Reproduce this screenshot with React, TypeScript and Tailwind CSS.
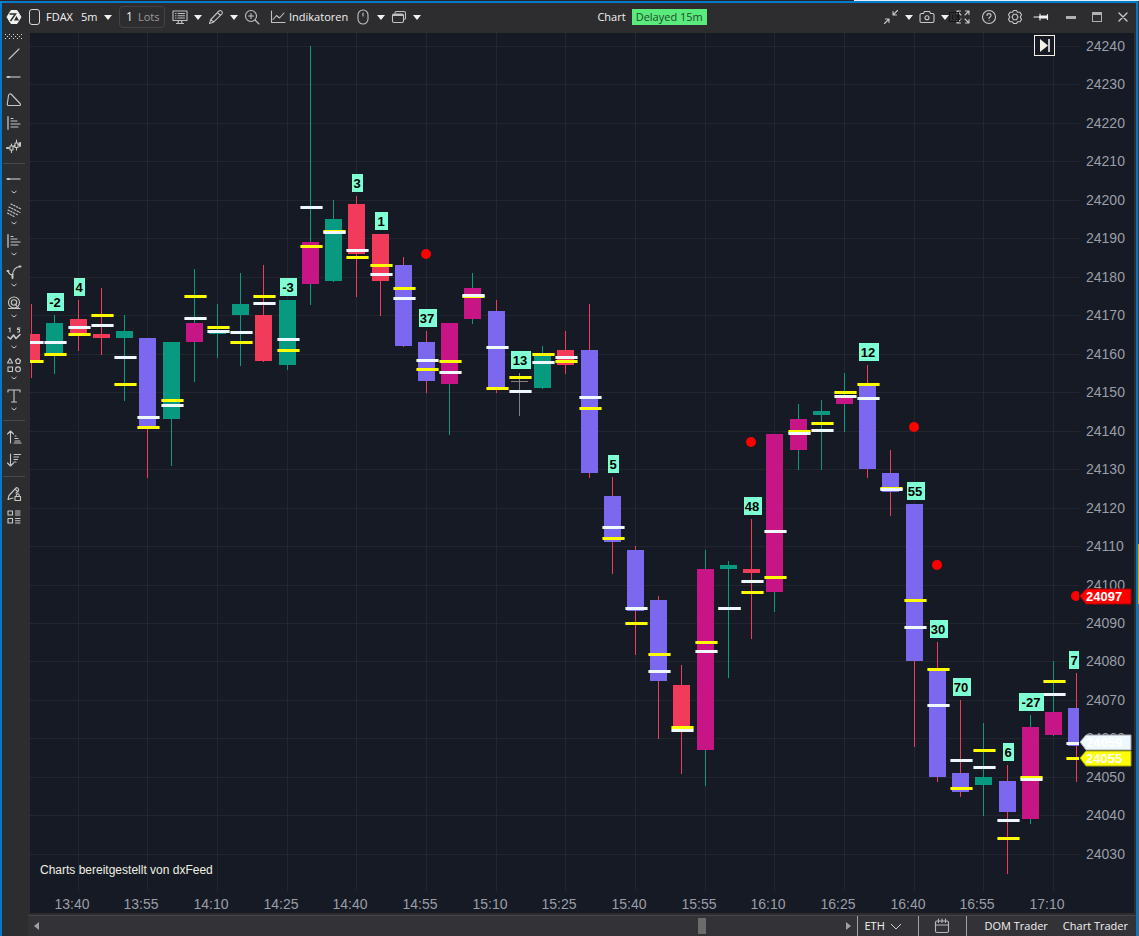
import type { ReactNode } from "react";

type Kind = "up" | "down" | "sell" | "buy" | "flat";

// h/l: wick ends, t/b: body ends, w: white level, y: yellow level
type Bar = {
  h: number;
  t: number;
  b: number;
  l: number;
  w: number;
  y: number;
  k: Kind;
  tag?: string;
};

const FIRST_INDEX = -2;
const TOP_PRICE = 24240;
const STEP = 3.848;
const BAR_GAP = 23.22;

const FILL: Record<Kind, string> = {
  up: "#089981",
  down: "#f23a5b",
  sell: "#7b68ee",
  buy: "#c71585",
  flat: "#808080",
};

// prices are stored without the leading 24000
const BARS: Bar[] = [
  { h: 173, t: 165, b: 158, l: 154, w: 162.9, y: 158, k: "down" },
  { h: 170, t: 168, b: 160, l: 155, w: 163.1, y: 160, k: "up", tag: "-2" },
  { h: 174, t: 169, b: 165, l: 161, w: 167, y: 165, k: "down", tag: "4" },
  { h: 177, t: 165, b: 164, l: 160, w: 167.4, y: 170, k: "down" },
  { h: 170, t: 166, b: 164, l: 148, w: 159.1, y: 152, k: "up" },
  { h: 164, t: 164, b: 141, l: 128, w: 143.5, y: 141, k: "sell" },
  { h: 163, t: 163, b: 143, l: 131, w: 146.6, y: 148, k: "up" },
  { h: 182, t: 168, b: 163, l: 153, w: 169.2, y: 175, k: "buy" },
  { h: 173, t: 166, b: 165, l: 159, w: 165.9, y: 167, k: "up" },
  { h: 181, t: 173, b: 170, l: 157, w: 165.6, y: 163, k: "up" },
  { h: 183, t: 170, b: 158, l: 158, w: 173.1, y: 175, k: "down" },
  { h: 174, t: 174, b: 157, l: 156, w: 163.8, y: 161, k: "up", tag: "-3" },
  { h: 240, t: 189, b: 178, l: 173, w: 198.1, y: 188, k: "buy" },
  { h: 200, t: 195, b: 179, l: 179, w: 191.6, y: 192, k: "up" },
  { h: 201, t: 199, b: 186, l: 175, w: 186.9, y: 185, k: "down", tag: "3" },
  { h: 191, t: 191, b: 179, l: 170, w: 180.7, y: 183, k: "down", tag: "1" },
  { h: 185, t: 183, b: 162, l: 162, w: 174.4, y: 177, k: "sell" },
  { h: 166, t: 163, b: 153, l: 150, w: 158.3, y: 156, k: "sell", tag: "37" },
  { h: 168, t: 168, b: 152, l: 139, w: 155.2, y: 158, k: "buy" },
  { h: 181, t: 177, b: 169, l: 168, w: 175.2, y: 174.9, k: "buy" },
  { h: 174, t: 171, b: 151, l: 150, w: 161.7, y: 151, k: "sell" },
  { h: 155, t: 153, b: 153, l: 144, w: 150.3, y: 154, k: "flat", tag: "13" },
  { h: 162, t: 160, b: 151, l: 151, w: 157.8, y: 160, k: "up" },
  { h: 166, t: 161, b: 157, l: 155, w: 159.1, y: 158, k: "down" },
  { h: 173, t: 161, b: 129, l: 128, w: 148.7, y: 146, k: "sell" },
  { h: 128, t: 123, b: 111, l: 103, w: 114.9, y: 112, k: "sell", tag: "5" },
  { h: 110, t: 109, b: 93, l: 82, w: 93.9, y: 90, k: "sell" },
  { h: 97, t: 96, b: 75, l: 60, w: 77.5, y: 82, k: "sell" },
  { h: 79, t: 74, b: 63, l: 51, w: 62.2, y: 63, k: "down" },
  { h: 109, t: 104, b: 57, l: 48, w: 82.7, y: 85, k: "buy" },
  { h: 106, t: 105, b: 104, l: 76, w: 93.9, y: 93.9, k: "up" },
  { h: 117, t: 104, b: 103, l: 86, w: 100.9, y: 98, k: "down", tag: "48" },
  { h: 139, t: 139, b: 98, l: 93, w: 113.9, y: 102, k: "buy" },
  { h: 147, t: 143, b: 135, l: 130, w: 139.4, y: 140, k: "buy" },
  { h: 148, t: 145, b: 144, l: 130, w: 140.1, y: 142, k: "up" },
  { h: 155, t: 149, b: 147, l: 140, w: 149, y: 150, k: "buy" },
  { h: 157, t: 152, b: 130, l: 128, w: 148.4, y: 152, k: "sell", tag: "12" },
  { h: 135, t: 129, b: 124, l: 118, w: 124.8, y: 125.1, k: "sell" },
  { h: 121, t: 121, b: 80, l: 58, w: 89, y: 96, k: "sell", tag: "55" },
  { h: 85, t: 78, b: 50, l: 49, w: 68.7, y: 78, k: "sell", tag: "30" },
  { h: 70, t: 51, b: 46, l: 45, w: 54.4, y: 47, k: "sell", tag: "70" },
  { h: 64, t: 50, b: 48, l: 40, w: 52.5, y: 57, k: "up" },
  { h: 53, t: 49, b: 41, l: 25, w: 38.8, y: 34, k: "sell", tag: "6" },
  { h: 66, t: 63, b: 39, l: 38, w: 49.4, y: 50, k: "buy", tag: "-27" },
  { h: 80, t: 67, b: 61, l: 61, w: 71.5, y: 75, k: "buy" },
  { h: 77, t: 68, b: 58, l: 49, w: 58.8, y: 55, k: "sell", tag: "7" },
];

const DOTS = [
  { i: 15, p: 186 },
  { i: 29, p: 137 },
  { i: 36, p: 141 },
  { i: 37, p: 105 },
  { i: 43, p: 97 },
];

const TIMES = [
  "13:40", "13:55", "14:10", "14:25", "14:40", "14:55", "15:10", "15:25",
  "15:40", "15:55", "16:10", "16:25", "16:40", "16:55", "17:10",
];

const PRICES = Array.from({ length: 22 }, (_, i) => TOP_PRICE - i * 10);

const toX = (i: number) => Math.floor(48.2 + i * BAR_GAP);
const toY = (p: number) => Math.floor(13.3 + (240 - p) * STEP);

const tagBox = (tag: string) => {
  if (tag === "1") return { left: -5, width: 13 };
  if (tag === "7") return { left: -7, width: 18 };
  if (tag.length === 1) return { left: -4, width: 11 };
  if (tag.length === 3) return { left: -11, width: 25 };
  if (tag.startsWith("-")) return { left: -7, width: 17 };
  if (tag.startsWith("1")) return { left: -8, width: 20 };
  return { left: -7, width: 18 };
};

const Level = ({ x, y, color }: { x: number; y: number; color: string }) => (
  <g fill={color}>
    <rect x={x - 10} y={y - 1} width={23} height={3} opacity={0.6} />
    <rect x={x - 9} y={y - 1} width={21} height={3} />
  </g>
);

const Candle = ({ bar, i }: { bar: Bar; i: number }) => {
  const x = toX(i);
  const wick =
    bar.k === "flat"
      ? FILL.flat
      : bar.k === "up" || bar.k === "buy"
        ? FILL.up
        : FILL.down;
  const top = toY(bar.t);
  const height = Math.max(1, toY(bar.b) - top);
  return (
    <g>
      <rect x={x} y={toY(bar.h)} width={1} height={toY(bar.l) - toY(bar.h) + 1} fill={wick} />
      <rect x={x - 8} y={top} width={17} height={height} fill={FILL[bar.k]} />
      <Level x={x} y={toY(bar.y)} color="#ffff00" />
      <Level x={x} y={toY(bar.w)} color="#f0f8ff" />
    </g>
  );
};

const Tag = ({ bar, i }: { bar: Bar; i: number }) => {
  const tag = bar.tag ?? "";
  const box = tagBox(tag);
  const left = toX(i) + box.left;
  const top = toY(bar.h) - 22;
  const textWidth = tag === "7" ? 11 : box.width;
  return (
    <g>
      <rect x={left} y={top} width={box.width} height={18} fill="#7fffd4" />
      <text
        x={left + Math.round(textWidth / 2) - 1}
        y={top + 14}
        textAnchor="middle"
        className="fill-black text-[13px] font-bold"
      >
        {tag}
      </text>
    </g>
  );
};

const Plot = () => (
  <svg
    className="h-full w-full font-['Liberation_Sans',sans-serif]"
    role="img"
    aria-label="FDAX 5m candles"
  >
    <g fill="#23262f">
      {PRICES.map((p) => (
        <rect key={p} x={0} y={toY(p - 24000)} width="100%" height={1} />
      ))}
      {TIMES.map((t, i) => (
        <rect key={t} x={toX(i * 3)} y={0} width={1} height="100%" />
      ))}
    </g>
    {BARS.map((bar, i) => (
      <Candle key={i} bar={bar} i={i + FIRST_INDEX} />
    ))}
    {DOTS.map((d) => (
      <circle key={d.i} cx={toX(d.i)} cy={toY(d.p)} r={5} fill="#ff0000" />
    ))}
    {BARS.map((bar, i) => bar.tag && <Tag key={i} bar={bar} i={i + FIRST_INDEX} />)}
    <text x={10} y={841} className="fill-[#f0efe2] text-[12px]">
      Charts bereitgestellt von dxFeed
    </text>
  </svg>
);

const PriceTag = ({ p, fill, edge }: { p: number; fill: string; edge: string }) => {
  const y = toY(p - 24000);
  return (
    <g>
      <path d={`M1 ${y}L7 ${y - 7}H52V${y + 8}H7Z`} fill={fill} stroke={edge} />
      <text x={7} y={y + 5} className="fill-white text-[13px] font-bold">
        {p}
      </text>
    </g>
  );
};

const PriceAxis = () => (
  <svg className="h-full w-[55px] shrink-0 font-['Liberation_Sans',sans-serif]">
    {PRICES.map((p) => (
      <text key={p} x={7} y={toY(p - 24000) + 5} className="fill-[#9b9ea7] text-[14px]">
        {p}
      </text>
    ))}
    <PriceTag p={24097} fill="#ff0000" edge="#a80000" />
    <PriceTag p={24059} fill="#f0f8ff" edge="#9ea3a8" />
    <PriceTag p={24055} fill="#ffff00" edge="#a8a800" />
  </svg>
);

const TimeAxis = () => (
  <svg className="h-[22px] w-full shrink-0 font-['Liberation_Sans',sans-serif]">
    {TIMES.map((t, i) => (
      <text
        key={t}
        x={toX(i * 3) - 6}
        y={18}
        textAnchor="middle"
        className="fill-[#9b9ea7] text-[14px]"
      >
        {t}
      </text>
    ))}
  </svg>
);

const Icon = ({ children, size = 16 }: { children: ReactNode; size?: number }) => (
  <svg
    width={size}
    height={size}
    viewBox="0 0 16 16"
    fill="none"
    stroke="currentColor"
    strokeWidth={1.1}
    strokeLinecap="round"
    strokeLinejoin="round"
    className="shrink-0"
    aria-hidden="true"
  >
    {children}
  </svg>
);

const Caret = () => (
  <svg width="8" height="5" viewBox="0 0 8 5" className="shrink-0" aria-hidden="true">
    <path d="M0 0H8L4 5Z" fill="#f1f1f1" />
  </svg>
);

const HBars = () => (
  <Icon>
    <path d="M2 2V14" strokeWidth="1.8" opacity=".7" />
    <path d="M5 3.500H7M5 6H11M5 9H14M5 12H12" />
  </Icon>
);

const Dash = () => (
  <Icon>
    <path d="M2 8H14" strokeWidth="1.4" opacity=".75" />
    <path d="M1.500 8H3" strokeWidth="2" />
  </Icon>
);

const QUICK_TOOLS = [
  { name: "Trend line", icon: <Icon><path d="M3 13L13 3" /></Icon> },
  { name: "Horizontal ray", icon: <Dash /> },
  {
    name: "Triangle",
    icon: (
      <Icon>
        <path d="M2.500 3.500C2.700 1.800 4.500 1.500 5.500 2.500L14 11.500C15 12.500 14.500 13.500 13.500 13.500H2.500C1.700 13.500 1.200 13 1.300 12Z" />
      </Icon>
    ),
  },
  { name: "Volume profile", icon: <HBars /> },
  {
    name: "Pattern",
    icon: (
      <Icon>
        <path d="M1 10H4M4 8H7V12H4ZM5.500 6V8M5.500 12V14.500M7 9L9 7M9 5H12V9.500H9ZM10.500 2V5M10.500 9.500V12M12 7L14.500 5" />
        <path d="M1 10H2M14 5V8" strokeWidth="2" />
      </Icon>
    ),
  },
];

const GROUP_TOOLS = [
  { name: "Lines", icon: <Dash /> },
  {
    name: "Channels",
    icon: (
      <Icon>
        <path d="M5 2L15 7M3 5L14 10.500M2 8L12 13M1.500 11L8 14.500" strokeDasharray="1.5 1.5" />
      </Icon>
    ),
  },
  { name: "Profiles", icon: <HBars /> },
  {
    name: "Curves",
    icon: (
      <Icon>
        <path d="M2 7C3 10 5 11 6.500 11C7 6 9 3 14 2.500" />
        <path d="M1.500 7H2.500M13.500 2.500H14.500M6.500 10.500V14" strokeWidth="2" />
      </Icon>
    ),
  },
  {
    name: "Ellipses",
    icon: (
      <Icon>
        <circle cx="8" cy="7.500" r="5.500" />
        <circle cx="8" cy="7.500" r="2.700" />
        <path d="M2.500 13.500H14M9 9L12.500 13" />
      </Icon>
    ),
  },
  {
    name: "Waves",
    icon: (
      <Icon>
        <path d="M3 2.500L4 2V6M14 2H11.500V3.500H13.500V6H11.500" />
        <path d="M2 11L4.500 13L7.500 9L10 12.500L14 8.500" strokeWidth="1.6" />
      </Icon>
    ),
  },
  {
    name: "Shapes",
    icon: (
      <Icon>
        <path d="M4 1.500L6.500 6H1.500ZM2 10H6.500V14.500H2Z" />
        <path d="M12 1.500L14.500 3.500L13.500 6.500H10.500L9.500 3.500Z" />
        <circle cx="12" cy="12.300" r="2.400" />
      </Icon>
    ),
  },
  { name: "Text", icon: <Icon><path d="M2 4V2H14V4M8 2V14M5.500 14H10.500" /></Icon> },
];

const SORT_TOOLS = [
  {
    name: "Sort ascending",
    icon: <Icon><path d="M4.500 14V2M1.500 5L4.500 2L7.500 5M9 7H10M9 9.500H12M9 12H14M8 14H15" /></Icon>,
  },
  {
    name: "Sort descending",
    icon: <Icon><path d="M4.500 2V14M1.500 11L4.500 14L7.500 11M8 2.500H14.500M8 5H12.500M8 7.500H11.500M8 10H10" /></Icon>,
  },
];

const OBJECT_TOOLS = [
  {
    name: "Lock drawings",
    icon: (
      <Icon>
        <path d="M7 12L2 13.500L3 9.500L10 2C11 1 13.500 3 12.500 4.500L10 7M9 3L12 6" />
        <path d="M9 10.500H14.500V14.500H9ZM10.300 10.500V9C10.300 7.500 13.200 7.500 13.200 9V10.500" />
      </Icon>
    ),
  },
  {
    name: "Object list",
    icon: (
      <Icon>
        <path d="M2 2H6.500V6H2ZM2 9.500H6.500V14H2ZM9.500 2H14M9.500 4H14M9.500 6H14M9.500 9.500H14M9.500 11.700H14M9.500 14H14" />
      </Icon>
    ),
  },
];

const ToolButton = ({ name, icon }: { name: string; icon: ReactNode }) => (
  <button aria-label={name} className="flex h-[23px] w-6 items-center justify-center">
    {icon}
  </button>
);

const Divider = () => <div className="h-px w-[22px] shrink-0 bg-[#4a4a4e]" />;

const DrawingTools = () => (
  <aside className="flex w-7 shrink-0 flex-col items-center bg-[#2d2d30] pr-1 text-[#c8c8c8]">
    <svg width="18" height="9" viewBox="0 0 18 9" className="shrink-0" aria-hidden="true">
      <path d="M0 1.500H18M0 5.500H18" stroke="#dcdcdc" strokeDasharray="1 3" />
      <path d="M2 3.500H18" stroke="#dcdcdc" strokeDasharray="1 3" />
    </svg>
    {QUICK_TOOLS.map((t) => (
      <ToolButton key={t.name} {...t} />
    ))}
    <div className="py-1.5">
      <Divider />
    </div>
    {GROUP_TOOLS.map((t) => (
      <button key={t.name} aria-label={t.name} className="flex h-[31px] w-6 shrink-0 flex-col items-center">
        <span className="flex h-[18px] items-center">{t.icon}</span>
        <svg width="6" height="9" viewBox="0 0 6 9" fill="none" stroke="currentColor" aria-hidden="true">
          <path d="M0.500 3L3 5L5.500 3" />
        </svg>
      </button>
    ))}
    <div className="pt-0.5 pb-1">
      <Divider />
    </div>
    {SORT_TOOLS.map((t) => (
      <ToolButton key={t.name} {...t} />
    ))}
    <div className="py-[5px]">
      <Divider />
    </div>
    {OBJECT_TOOLS.map((t) => (
      <ToolButton key={t.name} {...t} />
    ))}
  </aside>
);

const Logo = () => (
  <svg width="16" height="16" viewBox="0 0 16 16" className="shrink-0" aria-label="ATAS">
    <path d="M5 1.500H11L15 8L11 14.500H5L1 8Z" fill="#f1f1f1" stroke="#f1f1f1" strokeLinejoin="round" />
    <path d="M3.500 5H9.500L4.500 12" stroke="#2d2d30" strokeWidth="1.500" fill="none" />
    <path d="M10.500 7L13 11.500H8Z" fill="#2d2d30" />
  </svg>
);

const TopBar = () => (
  <header className="flex h-[30px] shrink-0 items-center justify-between bg-[#2d2d30] pr-[5px] pb-0.5 pl-1 text-[11px] text-[#f1f1f1]">
    <div className="flex items-center text-[#c0c0c0]">
      <Logo />
      <button aria-label="Link group" className="ml-[7px] h-4 w-[11px] rounded-[3px] border border-[#d8d8d8]" />
      <button className="ml-1.5 flex items-center text-[#f1f1f1]">
        <span className="w-[35px] text-left">FDAX</span>
        <span className="w-[23px] text-left">5m</span>
        <Caret />
      </button>
      <label className="ml-[7px] flex h-[22px] w-[46px] items-center rounded border border-[#434346] pl-1.5">
        <input
          defaultValue="1"
          aria-label="Lots"
          className="w-2 bg-transparent text-[12px] text-[#f1f1f1] outline-none"
        />
        <span className="ml-1 text-[#9a9a9a]">Lots</span>
      </label>
      <button aria-label="Chart type" className="ml-[7px] flex items-center gap-1.5">
        <Icon>
          <path d="M1 2H15V11.500H1ZM6.500 12L6 14M9.500 12L10 14M4.500 14.500H11.500" />
          <path d="M3.500 4.500H4M3.500 6.700H4M3.500 9H4M6 4.500H12.500M6 6.700H12.500M6 9H12.500" />
        </Icon>
        <Caret />
      </button>
      <button aria-label="Draw" className="ml-1.5 flex items-center gap-1.5">
        <Icon>
          <path d="M1.500 14.500L2.800 10.500L11 2C12.500 0.500 15.500 3 14 4.800L5.500 13.200ZM9.500 3.500L12.500 6.500M2.800 10.500L5.500 13.200" />
        </Icon>
        <Caret />
      </button>
      <button aria-label="Zoom in" className="ml-1.5">
        <Icon>
          <circle cx="7" cy="7" r="5.500" />
          <path d="M11 11L15 15M4.500 7H9.500M7 4.500V9.500" />
        </Icon>
      </button>
      <button className="ml-2.5 flex items-center gap-[3px] text-[#f1f1f1]">
        <span className="text-[#c0c0c0]">
          <Icon>
            <path d="M1.500 2V13.500H15M3 10.500L6.500 6.500L9.500 9L14 4" />
          </Icon>
        </span>
        Indikatoren
      </button>
      <button aria-label="Mouse" className="ml-[7px] flex items-center gap-1.5">
        <Icon>
          <rect x="3" y="1" width="10" height="14" rx="5" />
          <path d="M8 4V7" />
        </Icon>
        <Caret />
      </button>
      <button aria-label="Panels" className="ml-1.5 flex items-center gap-1.5">
        <Icon>
          <path d="M4 4C4 3 4.500 2.500 5.500 2.500H13C14 2.500 14.500 3 14.500 4V9C14.500 10 14 10.500 13 10.500" />
          <rect x="1.500" y="5" width="11" height="8.500" rx="1.500" />
          <path d="M2.500 6H11.500" strokeWidth="2" />
        </Icon>
        <Caret />
      </button>
    </div>

    <div className="flex items-center gap-1.5">
      <span>Chart</span>
      <span className="flex h-4 items-center bg-[#5aeb7d] px-1 text-[#1f4a2b]">Delayed 15m</span>
    </div>

    <div className="flex items-center text-[#c8c8c8]">
      <button aria-label="Collapse" className="flex items-center gap-1.5">
        <Icon>
          <path d="M1.500 14.500L6 10M2.500 10H6V13.500M14.500 1.500L10 6M10 2.500V6H13.500" />
        </Icon>
        <Caret />
      </button>
      <button aria-label="Screenshot" className="ml-1.5 flex items-center gap-1.5">
        <Icon>
          <path d="M2.500 4.500H4.500L5.500 2.500H10.500L11.500 4.500H13.500C14.500 4.500 15 5 15 6V12C15 13 14.500 13.500 13.500 13.500H2.500C1.500 13.500 1 13 1 12V6C1 5 1.500 4.500 2.500 4.500Z" />
          <circle cx="8" cy="8.800" r="2" />
        </Icon>
        <Caret />
      </button>
      <button aria-label="Full screen" className="relative ml-1.5">
        <Icon>
          <path d="M2 5.500V2H5.500M2 2L6 6M10.500 2H14V5.500M14 2L10 6M2 10.500V14H5.500M2 14L6 10M14 10.500V14H10.500M14 14L10 10" />
        </Icon>
        <svg
          width="12"
          height="10"
          viewBox="0 0 12 10"
          fill="none"
          stroke="#151515"
          className="absolute top-[3px] -left-1.5"
          aria-hidden="true"
        >
          <rect x="0.500" y="0.500" width="9" height="9" fill="#2d2d30" fillOpacity="0.6" />
          <path d="M3.500 3V7.500M6 3H9V5H6.500M6 7.500H11.500" />
        </svg>
      </button>
      <button aria-label="Help" className="ml-2.5">
        <Icon>
          <circle cx="8" cy="8" r="6.500" />
          <path d="M6 6.500C6 4 10 4 10 6.500C10 8 8 8 8 9.500M8 11.500V11.600" />
        </Icon>
      </button>
      <button aria-label="Settings" className="ml-2.5">
        <Icon>
          <path d="M6.500 1.500H9.500L10.500 3.300L13 3.200L14.500 5.800L13.300 8L14.500 10.200L13 12.800L10.500 12.700L9.500 14.500H6.500L5.500 12.700L3 12.800L1.500 10.200L2.700 8L1.500 5.800L3 3.200L5.500 3.300Z" />
          <path d="M6.500 5.300H9.500L11 8L9.500 10.700H6.500L5 8Z" />
        </Icon>
      </button>
      <button aria-label="Pin" className="ml-2.5 text-[#f1f1f1]">
        <Icon>
          <path d="M1 8H6M7 5V11M14.500 5.500V10.500" />
          <path d="M7.500 8H13.500" strokeWidth="3" />
        </Icon>
      </button>
      <button aria-label="Minimize" className="ml-3.5 flex h-5 w-4 items-center justify-center">
        <span className="h-[3px] w-2.5 bg-[#b0b0b0]" />
      </button>
      <button aria-label="Maximize" className="ml-2.5 flex h-5 w-4 items-center justify-center">
        <span className="h-2.5 w-2.5 border border-t-3 border-[#b0b0b0]" />
      </button>
      <button aria-label="Close" className="ml-2.5 flex h-5 w-4 items-center justify-center">
        <Icon>
          <path d="M4 4L12 12M12 4L4 12" strokeWidth="1.400" />
        </Icon>
      </button>
    </div>
  </header>
);

const BottomBar = () => (
  <footer className="flex h-[21px] shrink-0 items-center border-t border-[#46464a] bg-[#333337] text-[11px] text-[#f1f1f1]">
    <button aria-label="Scroll left" className="flex w-4 justify-center">
      <svg width="5" height="8" viewBox="0 0 5 8">
        <path d="M5 0V8L0 4Z" fill="#a0a0a0" />
      </svg>
    </button>
    <input
      type="range"
      aria-label="Scroll history"
      min={0}
      max={1000}
      defaultValue={829}
      className="h-4 min-w-0 flex-1 appearance-none bg-transparent [&::-webkit-slider-thumb]:h-4 [&::-webkit-slider-thumb]:w-2 [&::-webkit-slider-thumb]:appearance-none [&::-webkit-slider-thumb]:bg-[#6b6b6b]"
    />
    <button aria-label="Scroll right" className="flex w-4 justify-center">
      <svg width="5" height="8" viewBox="0 0 5 8">
        <path d="M0 0V8L5 4Z" fill="#a0a0a0" />
      </svg>
    </button>
    <label className="grid h-full w-[61px] items-center border-l border-[#a0a0a4] pr-4 pl-[7px]">
      <select
        aria-label="Session"
        className="col-start-1 row-start-1 w-full appearance-none bg-transparent outline-none"
      >
        <option>ETH</option>
      </select>
      <svg
        width="12"
        height="7"
        viewBox="0 0 12 7"
        fill="none"
        stroke="#d0d0d0"
        className="pointer-events-none col-start-1 row-start-1 justify-self-end"
      >
        <path d="M1 1L6 6L11 1" />
      </svg>
    </label>
    <button aria-label="Calendar" className="flex h-full w-12 items-center justify-center border-l border-[#a0a0a4] text-[#b8b8b8]">
      <Icon>
        <rect x="1.500" y="3" width="13" height="11.500" rx="1.500" />
        <path d="M1.500 7H14.500M4.500 1V4.500M8 1V4.500M11.500 1V4.500" />
      </Icon>
    </button>
    <div className="flex h-full items-center gap-[15px] border-l border-[#a0a0a4] pr-2 pl-[18px]">
      <button>DOM Trader</button>
      <button>Chart Trader</button>
    </div>
  </footer>
);

const ChartArea = () => (
  <main className="relative flex min-h-0 flex-1 flex-col bg-[#151a25]">
    <div className="flex min-h-0 flex-1">
      <div className="min-w-0 flex-1">
        <Plot />
      </div>
      <PriceAxis />
    </div>
    <TimeAxis />
    <button
      aria-label="Go to last bar"
      className="absolute top-0.5 right-[79px] flex h-[21px] w-[21px] items-center justify-center border border-[#f5efe6] bg-[#151a25]"
    >
      <svg width="12" height="13" viewBox="0 0 12 13">
        <path d="M1 0L9 6.500L1 13Z" fill="#f5efe6" />
        <path d="M10 0V13" stroke="#c9c5be" strokeWidth="2" />
      </svg>
    </button>
  </main>
);

const App = () => (
  <div className="flex h-screen flex-col overflow-hidden bg-[#2d2d30] font-['Open_Sans',sans-serif] select-none">
    <div className="flex h-px shrink-0">
      <div className="w-3/4 bg-[#252526]" />
      <div className="flex-1 bg-[#e6eef5]" />
    </div>
    <div className="flex min-h-0 flex-1">
      <div className="flex min-w-0 flex-1 flex-col border-x-2 border-t-2 border-[#007acc]">
        <TopBar />
        <div className="flex min-h-0 flex-1">
          <DrawingTools />
          <div className="flex min-w-0 flex-1 flex-col pr-0.5 pb-0.5">
            <ChartArea />
          </div>
        </div>
        <div className="pl-[26px]">
          <BottomBar />
        </div>
      </div>
      <div className="flex w-px flex-col">
        <div className="flex-[54] bg-[#3a3a3d]" />
        <div className="flex-[6] bg-[#f0a000]" />
        <div className="flex-[33] bg-[#5a6068]" />
      </div>
    </div>
  </div>
);

export default App;
